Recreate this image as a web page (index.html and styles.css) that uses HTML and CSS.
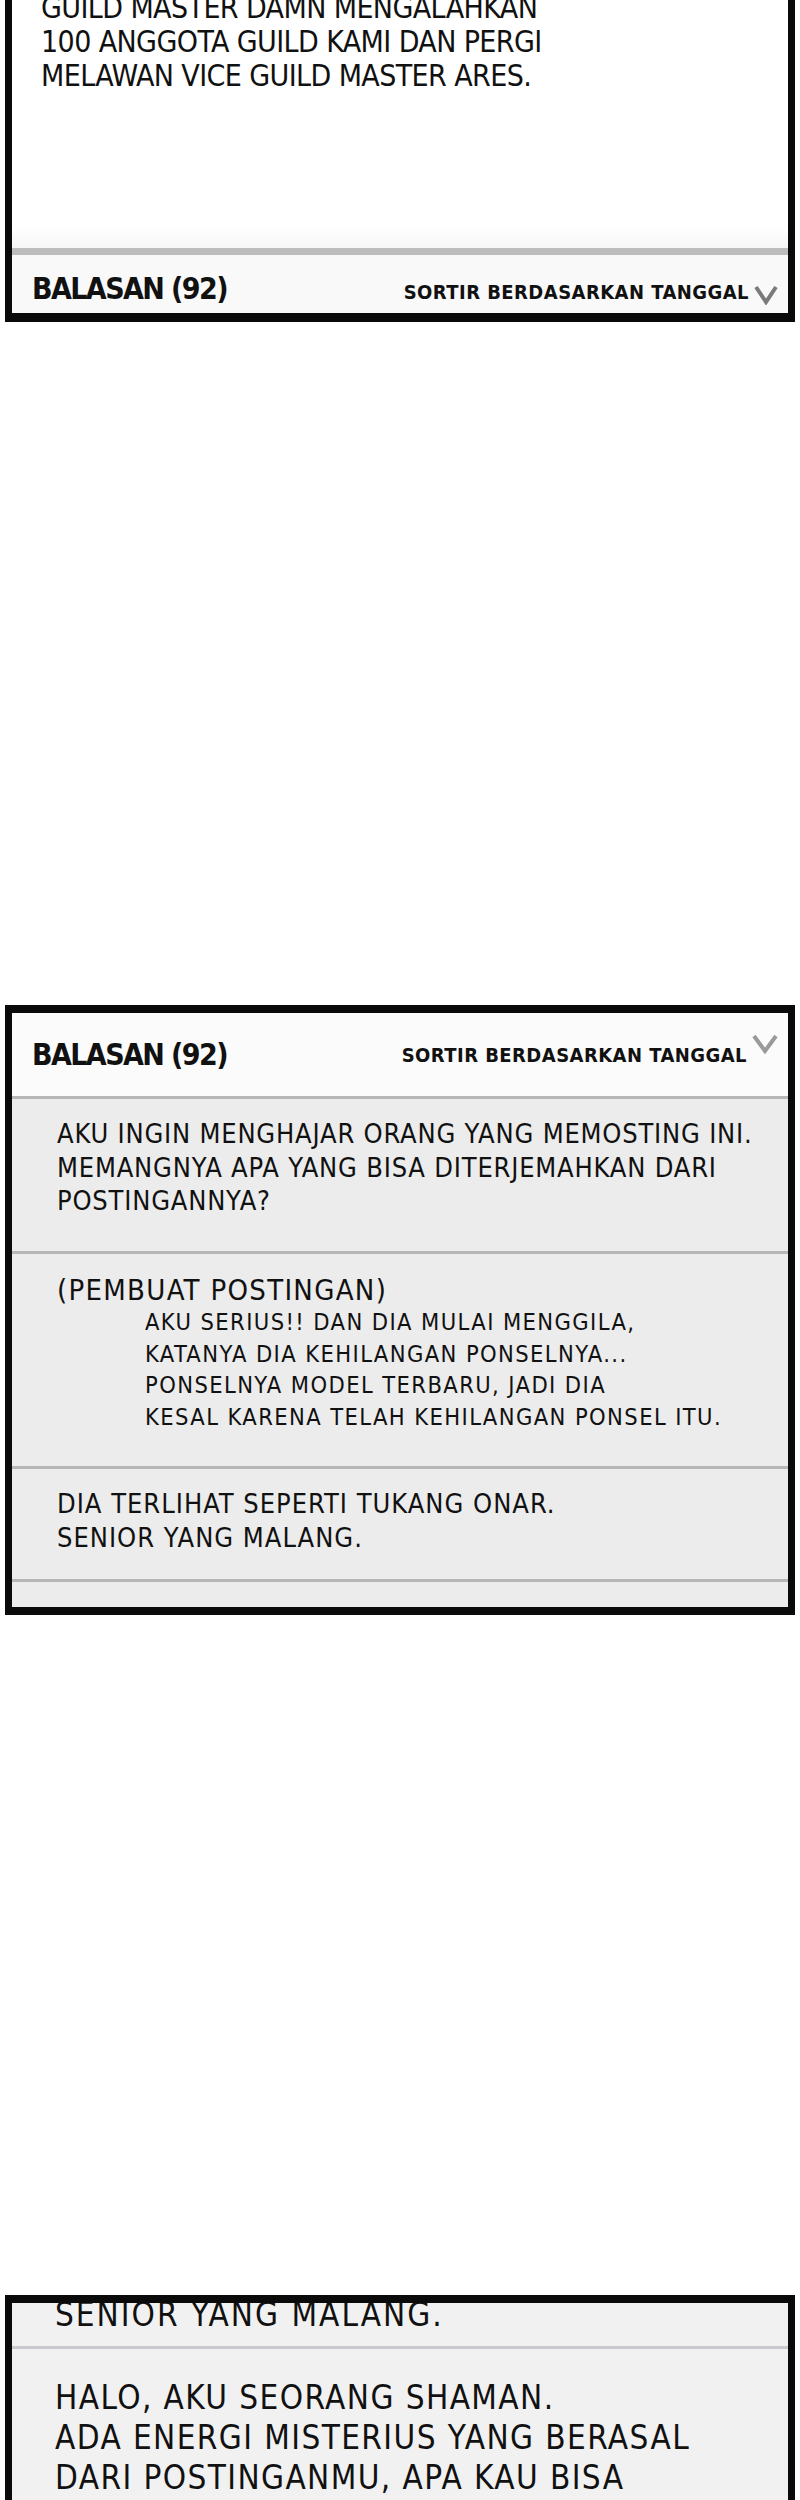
FILE: index.html
```html
<!DOCTYPE html>
<html lang="id">
<head>
  <meta charset="UTF-8" />
  <meta name="viewport" content="width=device-width, initial-scale=1.0"/>
  <title>Balasan</title>
  <link rel="stylesheet" href="styles.css">
</head>
<body>

  <!-- postingan + kepala balasan -->
  <div class="panel panel-top">
    <div class="post-body">
      <p>GUILD MASTER DAMN MENGALAHKAN<br>100 ANGGOTA GUILD KAMI DAN PERGI<br>MELAWAN VICE GUILD MASTER ARES.</p>
    </div>
    <div class="replies-head head-bottom">
      <span class="count">BALASAN (92)</span>
      <span class="sort">SORTIR BERDASARKAN TANGGAL
        <svg class="chev" width="24" height="20" viewBox="0 0 24 20"><path d="M2 2 L12 17 L22 2" fill="none" stroke="#7a7a7a" stroke-width="4"/></svg>
      </span>
    </div>
  </div>

  <!-- daftar balasan -->
  <div class="panel panel-mid">
    <div class="replies-head head-center">
      <span class="count">BALASAN (92)</span>
      <span class="sort">SORTIR BERDASARKAN TANGGAL
        <svg class="chev chev-up" width="26" height="20" viewBox="0 0 26 20"><path d="M2 2 L13 17 L24 2" fill="none" stroke="#9a9a9a" stroke-width="4"/></svg>
      </span>
    </div>
    <div class="reply r1">
      <p>AKU INGIN MENGHAJAR ORANG YANG MEMOSTING INI.<br>MEMANGNYA APA YANG BISA DITERJEMAHKAN DARI<br>POSTINGANNYA?</p>
    </div>
    <div class="reply r2">
      <p class="author">(PEMBUAT POSTINGAN)</p>
      <p class="quote">AKU SERIUS!! DAN DIA MULAI MENGGILA,<br>KATANYA DIA KEHILANGAN PONSELNYA...<br>PONSELNYA MODEL TERBARU, JADI DIA<br>KESAL KARENA TELAH KEHILANGAN PONSEL ITU.</p>
    </div>
    <div class="reply r3">
      <p>DIA TERLIHAT SEPERTI TUKANG ONAR.<br>SENIOR YANG MALANG.</p>
    </div>
    <div class="reply-end"></div>
  </div>

  <!-- lanjutan, diperbesar -->
  <div class="panel panel-big">
    <div class="reply big-prev">
      <p>SENIOR YANG MALANG.</p>
    </div>
    <div class="reply big-next">
      <p>HALO, AKU SEORANG SHAMAN.<br>ADA ENERGI MISTERIUS YANG BERASAL<br>DARI POSTINGANMU, APA KAU BISA</p>
    </div>
  </div>

</body>
</html>
```

FILE: styles.css
```css
body {
  margin: 0;
  background: #fff;
  font-family: "DejaVu Sans", Roboto, sans-serif;
  font-stretch: condensed;
  color: #111;
}
p {
  margin: 0;
}

.panel {
  margin: 0 5px;
  border: 7px solid #0a0a0a;
  border-top-width: 8px;
  border-bottom-width: 8px;
  overflow: hidden;
}

/* panel pertama: bagian atas terpotong */
.panel-top {
  margin-top: -30px;
  border-bottom-width: 9px;
}
.post-body {
  height: 270px;
  padding: 13px 0 0 29px;
  box-sizing: border-box;
  background: linear-gradient(#fff 92%, #f6f6f6);
}
.post-body p {
  font-size: 30px; line-height: 34px; letter-spacing: -0.6px;
}

.replies-head {
  display: flex; justify-content: space-between;
  padding: 0 10px 0 20px;
}
.head-bottom {
  align-items: baseline;
  padding-top: 16px;
  box-sizing: border-box;
  border-top: 7px solid #bcbcbc;
  height: 65px;
  background: #f9f9f9;
}
.head-center {
  height: 83px;
  align-items: center;
  background: #fbfbfb;
}
.count {
  font-weight: bold; font-size: 30px; letter-spacing: -1.6px;
}
.sort {
  font-weight: bold; font-size: 20px; letter-spacing: 0.45px;
  display: flex; align-items: flex-end; gap: 5px;
}
.chev {
  margin-bottom: -1px;
}
.chev-up {
  align-self: flex-start;
  margin: -9px 0 0 0;
}

/* baris balasan */
.reply {
  background: #ececec;
  border-top: 3px solid #b7b7b7;
  padding-left: 45px;
}
.reply p {
  font-size: 27px; line-height: 33.5px; letter-spacing: 0.8px;
}
.r1 { height: 155px; padding-top: 18px; box-sizing: border-box; }
.r2 { height: 215px; padding-top: 19px; box-sizing: border-box; }
.r3 { height: 113px; padding-top: 18px; box-sizing: border-box; }
.r3 p { letter-spacing: 1px; }
.reply .author {
  font-size: 29px; line-height: 34px; letter-spacing: 1.3px;
}
.reply .quote {
  padding-left: 88px;
  font-size: 23.5px; line-height: 31.5px; letter-spacing: 1.4px;
}
.reply-end {
  height: 25px;
  background: #ececec;
  border-top: 3px solid #b7b7b7;
}

.panel-mid {
  margin-top: 683px;
}

.panel-big {
  margin-top: 680px;
  border-bottom: none;
}
.panel-big .reply {
  background: #f1f1f2;
  padding-left: 43px;
}
.panel-big .reply p {
  font-size: 33px; line-height: 40px; letter-spacing: 1.4px;
}
.big-prev {
  border-top: none !important;
  height: 51px;
  padding-top: 0;
  margin-top: -8px;
}
.big-prev p { letter-spacing: 2px !important; }
.big-next {
  border-top-color: #c9c9d0 !important;
  padding-top: 29px;
  height: 200px;
}
```
